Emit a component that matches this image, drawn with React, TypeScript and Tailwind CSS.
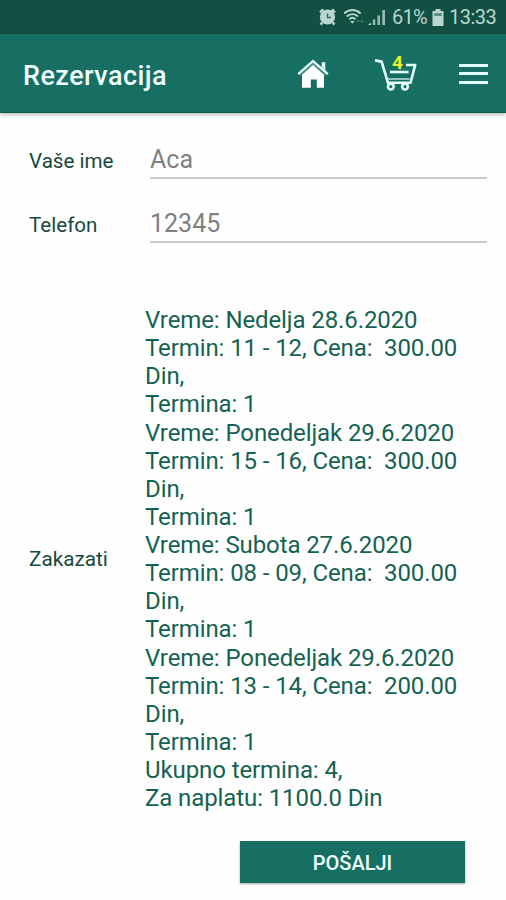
import { useState } from 'react'

interface Booking {
  time: string
  slot: string
  price: string
  count: number
}

const BOOKINGS: Booking[] = [
  { time: 'Nedelja 28.6.2020', slot: '11 - 12', price: '300.00', count: 1 },
  { time: 'Ponedeljak 29.6.2020', slot: '15 - 16', price: '300.00', count: 1 },
  { time: 'Subota 27.6.2020', slot: '08 - 09', price: '300.00', count: 1 },
  { time: 'Ponedeljak 29.6.2020', slot: '13 - 14', price: '200.00', count: 1 },
]

function AlarmIcon() {
  return (
    <svg width="19" height="20" viewBox="0 0 20 20" fill="none">
      <circle cx="10" cy="10" r="8" fill="currentColor" />
      <path d="M2.2 5.2 5.4 2.2M17.8 5.2 14.6 2.2M4.4 15.8 2.8 18M15.6 15.8 17.2 18" stroke="currentColor" strokeWidth="2.8" />
      <path d="M10 6.2V10.5H13.5" stroke="#2c6459" strokeWidth="1.5" />
    </svg>
  )
}

function WifiIcon() {
  return (
    <svg width="22" height="17" viewBox="0 0 22 17" fill="none" stroke="currentColor" strokeWidth="1.9">
      <path d="M1.2 4.5C6-.1 12.8-.1 17.6 4.5" />
      <path d="M3.8 7.5C7 4.3 11.8 4.3 15 7.5" />
      <path d="M6.3 10.3C8.2 8.5 10.6 8.5 12.5 10.3" />
      <path d="M7.1 12h4.6l-2.3 2.7z" fill="currentColor" stroke="none" />
      <path d="M13.2 11.2 15 13.8l1.8-2.6zM17 13.2l1.8-2.6 1.8 2.6z" fill="currentColor" stroke="none" opacity=".35" />
    </svg>
  )
}

function SignalIcon() {
  return (
    <svg width="18" height="17" viewBox="0 0 18 17" fill="currentColor">
      <path d="M0 16 3 13.5V16z" />
      <path d="M4.8 10.5h2.5V16H4.8zM9.5 6.5H12V16H9.5zM14.3 1H17v15h-2.7z" opacity=".8" />
    </svg>
  )
}

function BatteryIcon() {
  return (
    <svg width="12" height="17" viewBox="0 0 12 17" fill="currentColor">
      <path d="M3.5 0h5v2h3v15H.5V2h3z" />
      <path d="M2.2 4.2h7.6v2.7H2.2z" fill="#54877d" />
    </svg>
  )
}

function HomeIcon() {
  return (
    <svg width="32" height="30" viewBox="0 0 32 30" fill="none">
      <path d="M24.7 3.2h3.6v8.2l-3.6-3.6z" fill="#e5fffb" />
      <path d="M5 15.5 16 5.6l11 9.9v13.3h-7.2v-8.3h-6v8.3H5z" fill="#fff" />
      <path d="M3.6 16.1 16 5l12.4 11.1" stroke="#4b8f87" strokeWidth="1.2" />
      <path d="M1.2 15.1 16 2l14.8 13.1" stroke="#e5fffb" strokeWidth="2.4" />
    </svg>
  )
}

function CartIcon() {
  return (
    <svg width="42" height="34" viewBox="0 0 42 34" fill="none" stroke="#e3fffb" strokeWidth="2.6" strokeLinejoin="round">
      <path d="M0 2.4 6.6 3.6 13 24.8h22.5L40.2 7H31" />
      <path d="M15 14h18.6" />
      <path d="M12.6 21h22" strokeWidth="1.2" />
      <circle cx="15.8" cy="28.6" r="2.9" fill="#176f64" />
      <circle cx="30" cy="28.6" r="2.9" fill="#176f64" />
    </svg>
  )
}

function StatusBar() {
  return (
    <div className="h-[34px] bg-[#125044] text-[#b9d6d0] flex items-center justify-end pr-2.5">
      <AlarmIcon />
      <div className="ml-1.5"><WifiIcon /></div>
      <div className="ml-[3px]"><SignalIcon /></div>
      <span className="ml-1.5 w-[37px] text-[20px] leading-none whitespace-nowrap tracking-[-0.7px]">61%</span>
      <div className="ml-[3px]"><BatteryIcon /></div>
      <span className="ml-[5px] w-[47px] text-[20px] leading-none whitespace-nowrap tracking-[-0.5px]">13:33</span>
    </div>
  )
}

function Header({ count }: { count: number }) {
  return (
    <header className="h-[79px] bg-[#176f64] border-b border-[#10594f] shadow-[0_2px_4px_rgba(0,0,0,0.25)] flex items-center pl-[23px] pr-[18px]">
      <h1 className="flex-1 text-[27px] font-medium leading-none tracking-[0.45px] text-[#f1fffd] mt-[7px]">Rezervacija</h1>
      <button className="mt-0.5"><HomeIcon /></button>
      <button className="relative ml-[46px] mt-1">
        <CartIcon />
        <span className="absolute left-[17px] -top-[5px] text-[19px] font-bold leading-none text-[#e3f52f]">{count}</span>
      </button>
      <button className="ml-[42px] mt-px w-[29px] flex flex-col gap-[5.5px]">
        <span className="block h-[3px] bg-[#e3fffb]" />
        <span className="block h-[3px] bg-[#e3fffb]" />
        <span className="block h-[3px] bg-[#e3fffb]" />
      </button>
    </header>
  )
}

interface FieldProps {
  label: string
  value: string
  onChange: (value: string) => void
}

function Field({ label, value, onChange }: FieldProps) {
  return (
    <label className="flex h-16 items-center pl-[29px] pr-[19px]">
      <span className="w-[121px] pt-0.5 text-[20.6px] text-[#17483e]">{label}</span>
      <input
        className="flex-1 min-w-0 h-[38px] pt-px border-b-2 border-[#cbcbcb] text-[25px] text-[#808080] outline-none"
        value={value}
        onChange={(e) => onChange(e.target.value)}
      />
    </label>
  )
}

export default function App() {
  const [name, setName] = useState('Aca')
  const [phone, setPhone] = useState('12345')

  const total = BOOKINGS.reduce((sum, b) => sum + Number(b.price), 0)

  return (
    <div className="h-[900px] w-full overflow-hidden bg-[#fefefe] font-[Roboto,sans-serif]">
      <StatusBar />
      <Header count={BOOKINGS.length} />

      <main className="pt-[15px]">
        <Field label="Vaše ime" value={name} onChange={setName} />
        <Field label="Telefon" value={phone} onChange={setPhone} />

        <div className="mt-[50px] flex items-center pl-[29px]">
          <span className="w-[116px] text-[20.7px] text-[#17483e]">Zakazati</span>
          <div className="w-[330px] text-[24px] leading-[28.12px] tracking-[-0.1px] text-[#156252]">
            {BOOKINGS.map((b, i) => (
              <div key={i}>
                <p>Vreme: {b.time}</p>
                <p>Termin: {b.slot}, Cena: &nbsp;{b.price} Din,</p>
                <p>Termina: {b.count}</p>
              </div>
            ))}
            <p>Ukupno termina: {BOOKINGS.length},</p>
            <p>Za naplatu: {total.toFixed(1)} Din</p>
          </div>
        </div>

        <button className="mt-[29px] ml-[240px] flex h-[42px] w-[225px] items-center justify-center bg-[#176f64] pt-0.5 text-[20px] font-medium text-[#f1fffd] shadow-[0_1px_2px_rgba(0,0,0,0.35)]">
          POŠALJI
        </button>
      </main>
    </div>
  )
}
